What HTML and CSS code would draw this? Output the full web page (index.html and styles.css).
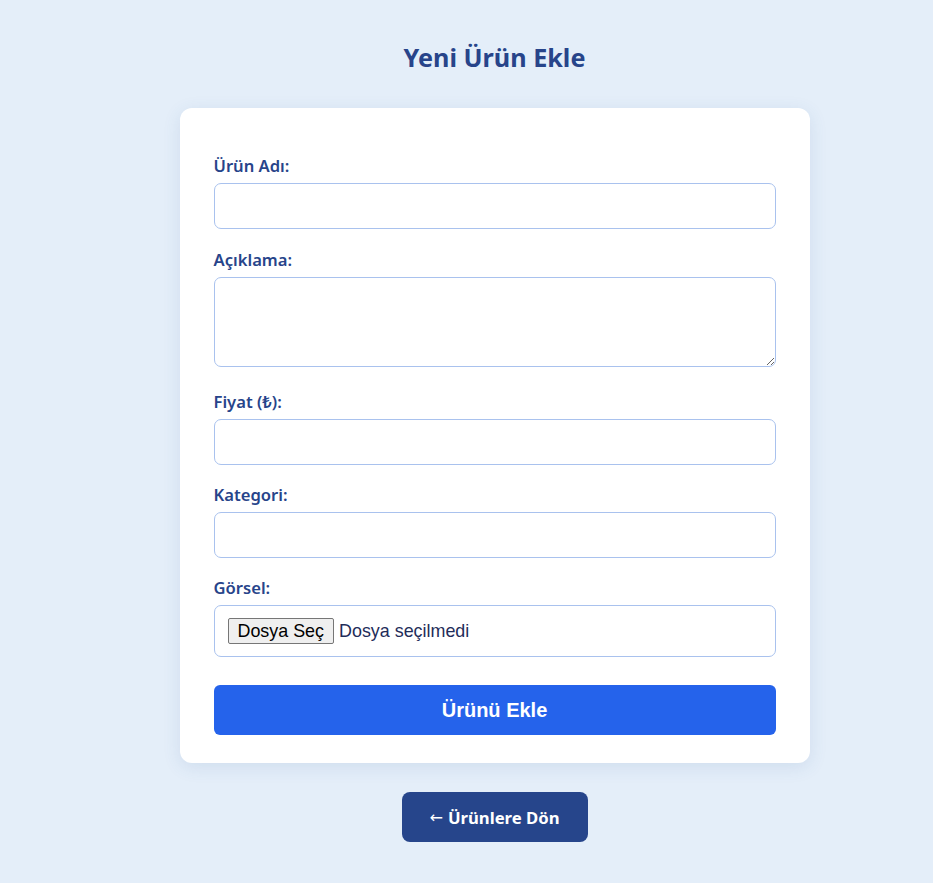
FILE: index.html
```html
<!DOCTYPE html>
<html lang="tr">
<head>
<meta charset="utf-8">
<title>Yeni Ürün Ekle</title>
<link rel="stylesheet" href="styles.css">
</head>
<body>
<main class="page">
  <h1 class="title">Yeni Ürün Ekle</h1>
  <form class="card">
    <div class="field">
      <label class="label" for="ad">Ürün Adı:</label>
      <input class="input" id="ad" type="text">
    </div>
    <div class="field field-area">
      <label class="label" for="aciklama">Açıklama:</label>
      <textarea class="input textarea" id="aciklama"></textarea>
    </div>
    <div class="field">
      <label class="label" for="fiyat">Fiyat (₺):</label>
      <input class="input" id="fiyat" type="text">
    </div>
    <div class="field">
      <label class="label" for="kategori">Kategori:</label>
      <input class="input" id="kategori" type="text">
    </div>
    <div class="field">
      <span class="label">Görsel:</span>
      <label class="input file">
        <input class="file-hidden" type="file">
        <span class="file-btn">Dosya Seç</span>
        <span class="file-text">Dosya seçilmedi</span>
      </label>
    </div>
    <button class="submit" type="button">Ürünü Ekle</button>
  </form>
  <a class="back" href="#"><span class="arrow">←</span> Ürünlere Dön</a>
</main>
</body>
</html>
```
FILE: styles.css
```css
* { box-sizing: border-box; }
html, body { margin: 0; padding: 0; }
body {
  background: #e4eef9;
  font-family: "Noto Sans", "Open Sans", sans-serif;
  color: #27448a;
  min-height: 883px;
}
.page {
  display: flex;
  flex-direction: column;
  align-items: center;
  padding: 40px 0 0 56px;
}
.title {
  margin: 0 0 34px;
  font-size: 25.2px;
  line-height: 34px;
  font-weight: 700;
  color: #27448a;
}
.card {
  width: 630px;
  background: #fff;
  border-radius: 12px;
  box-shadow: 0 4px 18px rgba(60, 100, 160, 0.12);
  padding: 47px 34px 28px;
  display: flex;
  flex-direction: column;
}
.field {
  display: flex;
  flex-direction: column;
  margin-bottom: 19px;
}
.field:first-child { margin-bottom: 20px; }
.field-area { margin-bottom: 24px; }
.label {
  display: block;
  height: 22px;
  font-size: 16.6px;
  font-weight: 600;
  line-height: 22px;
  margin-bottom: 6px;
  color: #27448a;
}
.input {
  width: 100%;
  height: 46px;
  border: 1px solid #a9c2ee;
  border-radius: 7px;
  background: #fff;
  font-size: 16px;
  padding: 10px 12px;
  font-family: inherit;
}
.textarea {
  height: 90px;
  resize: vertical;
  display: block;
}
.file {
  height: 52px;
  display: flex;
  align-items: center;
  padding: 0 13px;
  font-family: "Liberation Sans", Arial, sans-serif;
  font-size: 17.9px;
  cursor: pointer;
}
.file-hidden { display: none; }
.file-btn {
  background: #efefef;
  border: 1px solid #767676;
  border-radius: 2px;
  padding: 1px 9px;
  line-height: 22px;
  color: #000;
  margin-right: 5px;
}
.file-text { color: #1f2d5a; }
.submit {
  margin-top: 9px;
  height: 50px;
  border: none;
  border-radius: 6px;
  background: #2563eb;
  color: #fff;
  font-family: "Liberation Sans", Arial, sans-serif;
  font-size: 20px;
  font-weight: 700;
  cursor: pointer;
}
.back {
  margin-top: 29px;
  width: 186px;
  height: 50px;
  border-radius: 8px;
  background: #26458b;
  color: #fff;
  text-decoration: none;
  font-weight: 700;
  font-size: 16.7px;
  display: flex;
  align-items: center;
  justify-content: center;
  gap: 5px;
}
.arrow {
  font-family: "DejaVu Sans", sans-serif;
  font-weight: 400;
  font-size: 16px;
}
```
